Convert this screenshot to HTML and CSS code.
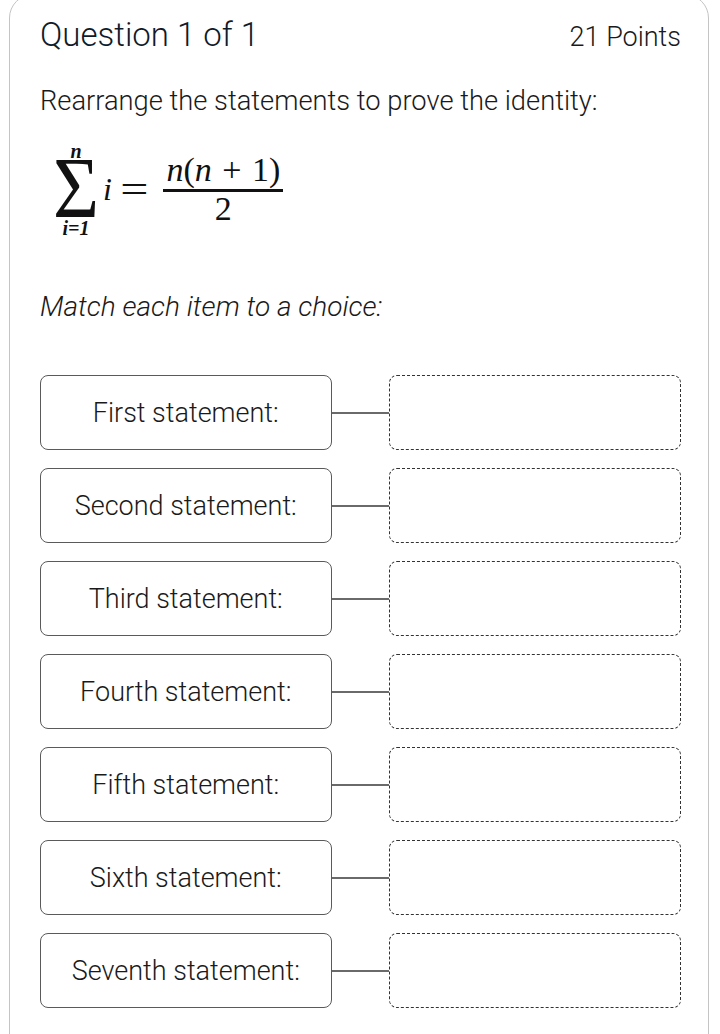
FILE: index.html
```html
<!DOCTYPE html>
<html lang="en">
<head>
<meta charset="utf-8">
<title>Question 1 of 1</title>
<link rel="stylesheet" href="styles.css">
</head>
<body>
<div class="card">
  <div class="header">
    <h1 class="title">Question 1 of 1</h1>
    <span class="points">21 Points</span>
  </div>
  <p class="prompt">Rearrange the statements to prove the identity:</p>
  <div class="formula">
    <div class="sum">
      <span class="sum-top">n</span>
      <span class="sum-sigma">Σ</span>
      <span class="sum-bot">i=1</span>
    </div>
    <span class="var">i</span>
    <span class="eq">=</span>
    <div class="frac">
      <span class="num"><i>n</i>(<i>n</i> + 1)</span>
      <span class="den">2</span>
    </div>
  </div>
  <p class="instr">Match each item to a choice:</p>
  <div class="pairs">
    <div class="pair"><div class="item">First statement:</div><div class="link"></div><div class="slot"></div></div>
    <div class="pair"><div class="item">Second statement:</div><div class="link"></div><div class="slot"></div></div>
    <div class="pair"><div class="item">Third statement:</div><div class="link"></div><div class="slot"></div></div>
    <div class="pair"><div class="item">Fourth statement:</div><div class="link"></div><div class="slot"></div></div>
    <div class="pair"><div class="item">Fifth statement:</div><div class="link"></div><div class="slot"></div></div>
    <div class="pair"><div class="item">Sixth statement:</div><div class="link"></div><div class="slot"></div></div>
    <div class="pair"><div class="item">Seventh statement:</div><div class="link"></div><div class="slot"></div></div>
  </div>
</div>
</body>
</html>
```
FILE: styles.css
```css
html, body {
  margin: 0;
  padding: 0;
  height: 1034px;
  overflow: hidden;
  background: #ffffff;
}

body {
  font-family: Roboto, "Liberation Sans", sans-serif;
  font-weight: 300;
  color: #1a1a1a;
}

.card {
  box-sizing: border-box;
  margin: -6px 0 0 9px;
  width: 700px;
  height: 1100px;
  border: 1px solid #c4c4c4;
  border-radius: 24px 24px 0 0;
  padding: 20px 27px 0 30px;
}

.header {
  display: flex;
  justify-content: space-between;
  align-items: baseline;
}

.title {
  margin: 0;
  font-weight: 300;
  font-size: 33px;
  line-height: 40px;
  color: #0f1b2b;
}

.points {
  font-size: 27px;
  color: #1a1a1a;
}

.prompt {
  margin: 28px 0 0;
  font-size: 27.3px;
  line-height: 36px;
}

.formula {
  display: flex;
  align-items: center;
  margin-top: 18px;
  margin-left: 13px;
  height: 104px;
  font-family: "Liberation Serif", "DejaVu Serif", serif;
  font-weight: 400;
  color: #111;
}

.sum {
  align-self: flex-start;
  display: flex;
  flex-direction: column;
  align-items: center;
  width: 46px;
  padding-top: 6px;
}

.sum-top {
  font-style: italic;
  font-size: 20px;
  line-height: 16px;
  font-weight: 700;
}

.sum-sigma {
  display: flex;
  align-items: center;
  justify-content: center;
  height: 58px;
  font-family: "Liberation Serif", serif;
  font-size: 86px;
  line-height: 1;
  transform: scaleX(0.92);
}

.sum-bot {
  font-style: italic;
  font-size: 20px;
  line-height: 22px;
  font-weight: 700;
}

.var {
  font-style: italic;
  font-size: 32px;
  margin-left: 4px;
}

.eq {
  font-size: 40px;
  margin: 0 18px 0 11px;
  transform: scaleX(1.25);
}

.frac {
  display: flex;
  flex-direction: column;
  align-items: center;
}

.num {
  font-size: 34px;
  line-height: 34px;
  padding: 0 3px 2px;
  border-bottom: 3px solid #111;
  word-spacing: 2px;
}

.den {
  font-size: 34px;
  line-height: 34px;
}

.instr {
  margin: 48px 0 0;
  font-style: italic;
  font-size: 28px;
  line-height: 36px;
}

.pairs {
  display: flex;
  flex-direction: column;
  gap: 18px;
  margin-top: 50px;
}

.pair {
  display: flex;
  align-items: center;
  height: 75px;
}

.item {
  box-sizing: border-box;
  width: 292px;
  height: 75px;
  border: 1px solid #5a5a5a;
  border-radius: 8px;
  display: flex;
  align-items: center;
  justify-content: center;
  font-size: 27px;
  color: #1a1a1a;
}

.link {
  width: 58px;
  height: 2px;
  background: #6a6a6a;
}

.slot {
  box-sizing: border-box;
  width: 292px;
  height: 75px;
  border: 1px dashed #333;
  border-radius: 8px;
}
```
